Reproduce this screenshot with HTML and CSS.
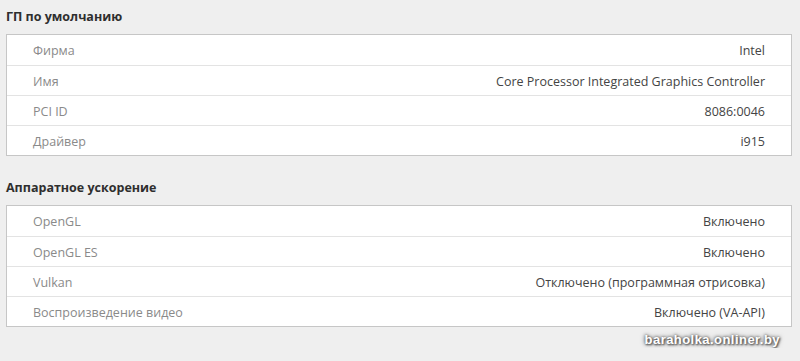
FILE: index.html
```html
<!DOCTYPE html>
<html lang="ru">
<head>
<meta charset="utf-8">
<link rel="stylesheet" href="styles.css">
</head>
<body>
<div class="page">
  <section class="group">
    <h2 class="title">ГП по умолчанию</h2>
    <div class="list">
      <div class="row"><span class="label">Фирма</span><span class="value">Intel</span></div>
      <div class="row"><span class="label">Имя</span><span class="value">Core Processor Integrated Graphics Controller</span></div>
      <div class="row"><span class="label">PCI ID</span><span class="value">8086:0046</span></div>
      <div class="row"><span class="label">Драйвер</span><span class="value">i915</span></div>
    </div>
  </section>
  <section class="group">
    <h2 class="title">Аппаратное ускорение</h2>
    <div class="list">
      <div class="row"><span class="label">OpenGL</span><span class="value">Включено</span></div>
      <div class="row"><span class="label">OpenGL ES</span><span class="value">Включено</span></div>
      <div class="row"><span class="label">Vulkan</span><span class="value">Отключено (программная отрисовка)</span></div>
      <div class="row"><span class="label">Воспроизведение видео</span><span class="value">Включено (VA-API)</span></div>
    </div>
  </section>
  <div class="watermark">baraholka.onliner.by</div>
</div>
</body>
</html>
```

FILE: styles.css
```css
html, body {
  margin: 0;
  padding: 0;
  background: #efefef;
}
body {
  font-family: "Open Sans", "Noto Sans", sans-serif;
  font-size: 12.5px;
  color: #3c3c3c;
}
.page {
  padding: 8px 8px 0 6px;
  display: flex;
  flex-direction: column;
}
.group {
  display: flex;
  flex-direction: column;
}
.group + .group {
  margin-top: 23px;
}
.title {
  margin: 0 0 8px 0;
  font-size: 12.5px;
  font-weight: 700;
  color: #2e2e2e;
  line-height: 18px;
}
.list {
  background: #ffffff;
  border: 1px solid #c6c6c6;
  display: flex;
  flex-direction: column;
}
.row {
  box-sizing: border-box;
  height: 30px;
  display: flex;
  align-items: center;
  justify-content: space-between;
  padding: 0 26px 0 26px;
}
.row + .row {
  border-top: 1px solid #e3e3e3;
  padding-top: 1px;
}
.label {
  color: #8a8a8a;
}
.value {
  color: #444444;
}
.watermark {
  align-self: flex-end;
  margin: 5px 12px 0 0;
  font-family: "Liberation Sans", sans-serif;
  font-weight: 700;
  font-size: 13px;
  line-height: 16px;
  letter-spacing: 0.45px;
  color: #ffffff;
  text-shadow: 0 0 3px #555, 0 0 5px #777, 1px 1px 2px #444;
}
```
